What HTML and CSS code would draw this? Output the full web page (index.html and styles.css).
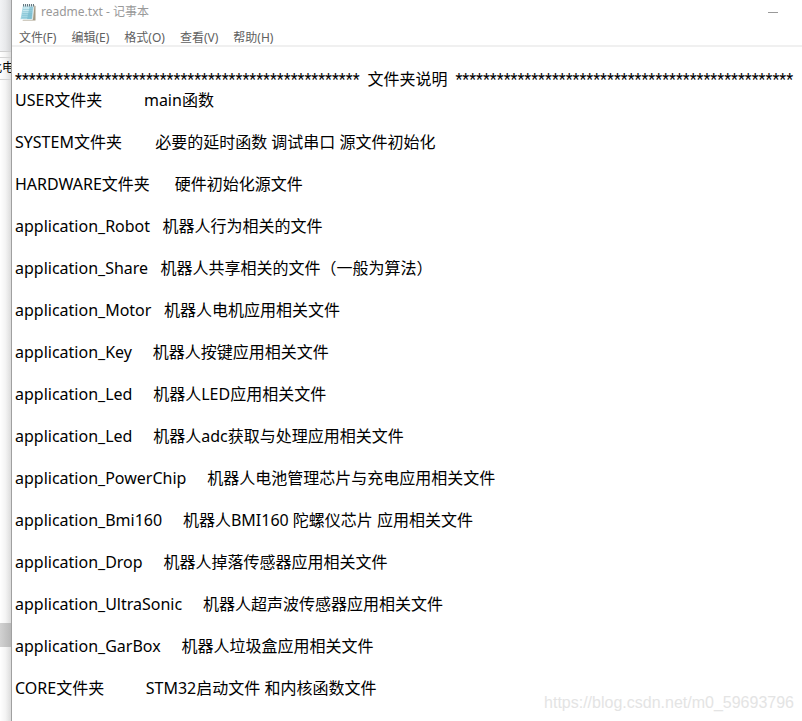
FILE: index.html
```html
<!DOCTYPE html>
<html lang="zh-CN">
<head>
    <meta charset="UTF-8">
    <title>readme.txt - 记事本</title>
    <link rel="stylesheet" href="styles.css">
</head>
<body>
    <div class="desktop">
        <div class="explorer">
            <div class="ribbon"></div>
            <div class="address">此电</div>
            <div class="files">
                <div class="selected"></div>
            </div>
        </div>

        <main class="notepad">
            <header class="titlebar">
                <svg class="icon" viewBox="0 0 16 18" width="16" height="18">
                    <path d="M13 2l2.500 1v14.500h-13z" fill="#a39a84"/>
                    <path d="M3 2.500h11l-1.500 14H.5z" fill="#a3d6e3"/>
                    <path d="M3.500 4h9.500l-.6 5.500H2.500z" fill="#c5e8f0"/>
                    <path d="M9.500 4H13l-1.500 12.500H7z" fill="#5fabc4" opacity=".5"/>
                    <path d="M3 6.500h9.500M2.700 8.500h9.500M2.300 10.500h9.500M2 12.500h9.500M1.700 14.500h9.500" stroke="#7dbfd1" stroke-width=".5"/>
                    <path d="M.5 16.500h12l1.500-14" fill="none" stroke="#fff" stroke-width=".7"/>
                    <path d="M3 2.500h11" stroke="#dfe9ec" stroke-width="2"/>
                    <path d="M3.500 1v2.500M5.500 1v2.500M7.500 1v2.500M9.500 1v2.500M11.500 1v2.500M13.500 1v2.500" stroke="#536a73" stroke-width=".9"/>
                </svg>
                <h1 class="title">readme.txt - 记事本</h1>
                <button class="minimize" aria-label="最小化"></button>
            </header>

            <nav class="menu">
                <button>文件(F)</button>
                <button>编辑(E)</button>
                <button>格式(O)</button>
                <button>查看(V)</button>
                <button>帮助(H)</button>
            </nav>

            <textarea class="banner" rows="1" wrap="off" spellcheck="false" aria-label="标题">**************************************************  文件夹说明  *************************************************</textarea>
            <textarea class="content" rows="30" wrap="off" spellcheck="false" aria-label="文本">USER文件夹          main函数

SYSTEM文件夹        必要的延时函数 调试串口 源文件初始化

HARDWARE文件夹      硬件初始化源文件

application_Robot   机器人行为相关的文件

application_Share   机器人共享相关的文件（一般为算法）

application_Motor   机器人电机应用相关文件

application_Key     机器人按键应用相关文件

application_Led     机器人LED应用相关文件

application_Led     机器人adc获取与处理应用相关文件

application_PowerChip     机器人电池管理芯片与充电应用相关文件

application_Bmi160     机器人BMI160 陀螺仪芯片 应用相关文件

application_Drop     机器人掉落传感器应用相关文件

application_UltraSonic     机器人超声波传感器应用相关文件

application_GarBox     机器人垃圾盒应用相关文件

CORE文件夹          STM32启动文件 和内核函数文件</textarea>
        </main>
        <span class="watermark">https://blog.csdn.net/m0_59693796</span>
    </div>
</body>
</html>
```
FILE: styles.css
```css
* {
    box-sizing: border-box;
}

body {
    margin: 0;
    overflow: hidden;
    background-color: white;
    font-family: "Noto Sans", "Noto Sans CJK SC", sans-serif;
}

.desktop {
    position: relative;
    display: flex;
    min-height: 100vh;
}

/* the window behind, only its edge is visible */
.explorer {
    display: flex;
    flex-direction: column;
    flex: 0 0 12px;
    overflow: hidden;
    background-image: linear-gradient(to right, #ffffff, #f4f4f4 50%, #dcdcdc);
    border-right: 1px solid #a0a0a0;
}

.ribbon {
    height: 52px;
    background-image: linear-gradient(to right, #f2f3f5, #e8e9eb 50%, #d3d4d6);
    border-bottom: 1px solid #d0d0d0;
}

.address {
    height: 23px;
    margin-top: 5px;
    border-top: 1px solid #d4d4d4;
    border-bottom: 1px solid #d4d4d4;
    font-size: 12px;
    line-height: 20px;
    text-indent: -10px;
    white-space: nowrap;
}

.files {
    flex: 1;
    display: flex;
    flex-direction: column;
    justify-content: flex-end;
    padding-bottom: 74px;
}

.selected {
    height: 24px;
    background-image: linear-gradient(to right, #d2d2d2, #b8b8b8);
}

.notepad {
    flex: 1;
    min-width: 0;
    display: flex;
    flex-direction: column;
    background-color: white;
}

.titlebar {
    display: flex;
    align-items: center;
    gap: 5px;
    height: 24px;
    padding: 0 24px 0 8px;
}

.title {
    flex: 1;
    margin: 0;
    color: #999999;
    font-size: 12px;
    font-weight: normal;
    line-height: 24px;
}

.minimize {
    width: 10px;
    height: 10px;
    padding: 0;
    border: none;
    background: linear-gradient(#999999, #999999) center / 100% 1px no-repeat;
}

.menu {
    display: flex;
    gap: 15px;
    height: 23px;
    padding: 0 7px;
    border-bottom: 2px solid #f0f0f0;
}

.menu button {
    padding: 2px 0 0;
    border: none;
    background: none;
    color: #606060;
    font-family: inherit;
    font-size: 12px;
    line-height: 24px;
}

textarea {
    display: block;
    width: 100%;
    margin: 0;
    padding: 0 3px;
    border: none;
    outline: none;
    resize: none;
    overflow: hidden;
    background: none;
    color: black;
    font-family: inherit;
    font-size: 16px;
    line-height: 21px;
}

.banner {
    margin-top: 22px;
    font-family: Roboto, "Noto Sans CJK SC", sans-serif;
}

.watermark {
    position: absolute;
    right: 8px;
    bottom: 8px;
    color: #e4e4e4;
    font-family: "Liberation Sans", sans-serif;
    font-size: 16px;
    line-height: 20px;
}
```
